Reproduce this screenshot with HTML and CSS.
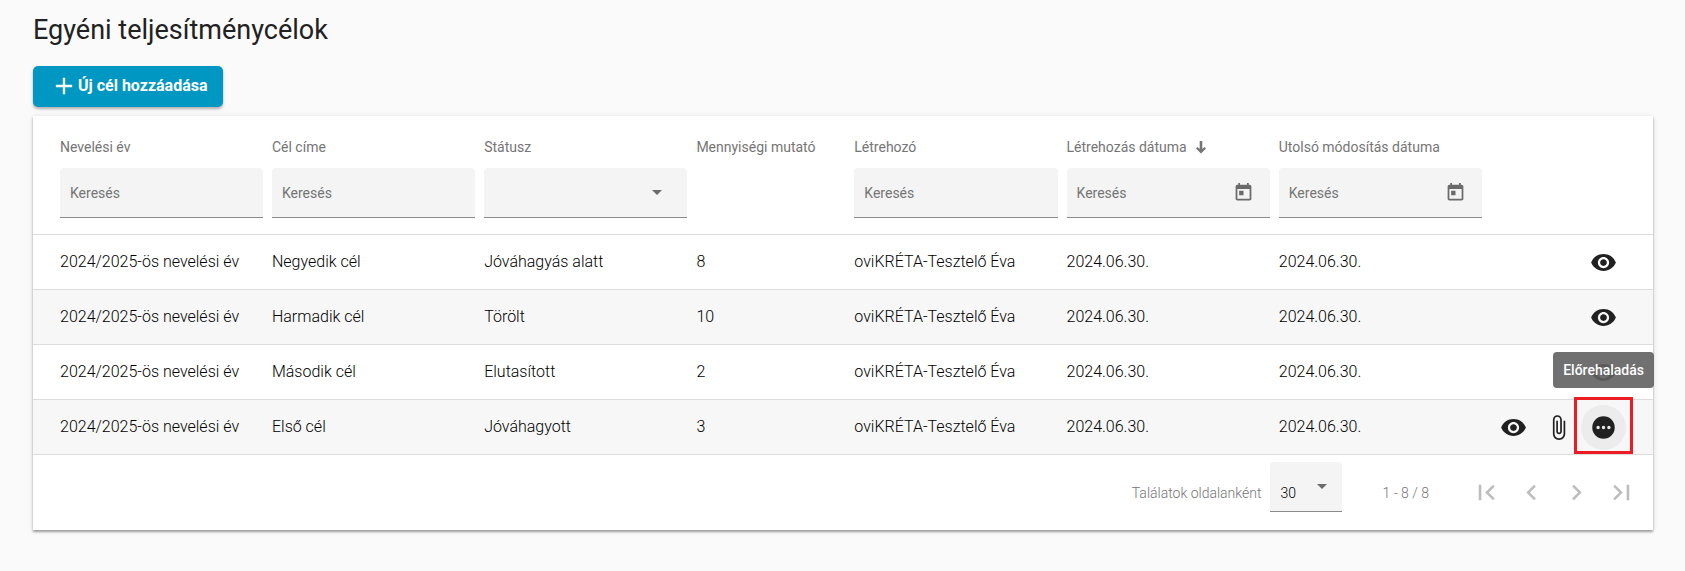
FILE: index.html
```html
<!DOCTYPE html>
<html lang="hu">
<head>
    <meta charset="UTF-8">
    <meta name="viewport" content="width=device-width, initial-scale=1.0">
    <title>Egyéni teljesítménycélok</title>
    <link rel="stylesheet" href="styles.css">
</head>
<body>
    <!-- Shared icons -->
    <svg class="icon-defs" aria-hidden="true">
        <symbol id="icon-eye" viewBox="0 0 24 24"><path d="M12 4.5C7 4.5 2.73 7.61 1 12c1.73 4.39 6 7.5 11 7.5s9.27-3.11 11-7.5c-1.73-4.39-6-7.5-11-7.5zM12 17c-2.76 0-5-2.24-5-5s2.24-5 5-5 5 2.24 5 5-2.24 5-5 5zm0-8c-1.66 0-3 1.34-3 3s1.34 3 3 3 3-1.34 3-3-1.34-3-3-3z"/></symbol>
        <symbol id="icon-clip" viewBox="0 0 24 24"><path d="M16.5 6v11.5c0 2.21-1.79 4-4 4s-4-1.79-4-4V5c0-1.38 1.12-2.5 2.5-2.5s2.5 1.12 2.5 2.5v10.5c0 .55-.45 1-1 1s-1-.45-1-1V6H10v9.5c0 1.38 1.12 2.5 2.5 2.5s2.5-1.12 2.5-2.5V5c0-2.21-1.79-4-4-4S7 2.79 7 5v12.5c0 3.04 2.46 5.5 5.5 5.5s5.5-2.46 5.5-5.5V6h-1.5z"/></symbol>
        <symbol id="icon-dots" viewBox="0 0 24 24"><path fill-rule="evenodd" d="M12 2a10 10 0 1 0 0 20 10 10 0 0 0 0-20zM7.2 10.5a1.5 1.5 0 1 1 0 3 1.5 1.5 0 0 1 0-3zm4.8 0a1.5 1.5 0 1 1 0 3 1.5 1.5 0 0 1 0-3zm4.8 0a1.5 1.5 0 1 1 0 3 1.5 1.5 0 0 1 0-3z"/></symbol>
        <symbol id="icon-calendar" viewBox="0 0 24 24"><path d="M19 3h-1V1h-2v2H8V1H6v2H5c-1.11 0-1.99.9-1.99 2L3 19c0 1.1.89 2 2 2h14c1.1 0 2-.9 2-2V5c0-1.1-.9-2-2-2zm0 16H5V8h14v11zM7 10h5v5H7z"/></symbol>
    </svg>

    <main class="page">
        <h1 class="page-title">Egyéni teljesítménycélok</h1>

        <button type="button" class="add-button">
            <svg viewBox="0 0 24 24"><path d="M19 13h-6v6h-2v-6H5v-2h6V5h2v6h6v2z"/></svg>
            Új cél hozzáadása
        </button>

        <section class="card">
            <table class="goals">
                <colgroup>
                    <col class="col-year">
                    <col class="col-text">
                    <col class="col-text">
                    <col class="col-count">
                    <col class="col-text">
                    <col class="col-text">
                    <col class="col-text">
                    <col>
                </colgroup>
                <thead>
                    <tr>
                        <th>
                            <label class="col-label" for="filter-year">Nevelési év</label>
                            <div class="field"><input type="text" id="filter-year" placeholder="Keresés"></div>
                        </th>
                        <th>
                            <label class="col-label" for="filter-title">Cél címe</label>
                            <div class="field"><input type="text" id="filter-title" placeholder="Keresés"></div>
                        </th>
                        <th>
                            <label class="col-label" for="filter-status">Státusz</label>
                            <div class="field select-field">
                                <select id="filter-status">
                                    <option></option>
                                    <option>Jóváhagyás alatt</option>
                                    <option>Törölt</option>
                                    <option>Elutasított</option>
                                    <option>Jóváhagyott</option>
                                </select>
                                <span class="caret"></span>
                            </div>
                        </th>
                        <th><span class="col-label">Mennyiségi mutató</span></th>
                        <th>
                            <label class="col-label" for="filter-creator">Létrehozó</label>
                            <div class="field"><input type="text" id="filter-creator" placeholder="Keresés"></div>
                        </th>
                        <th aria-sort="descending">
                            <label class="col-label" for="filter-created">Létrehozás dátuma
                                <svg class="sort-arrow" viewBox="0 0 12 14"><path d="M4.7 1h2.6v8l2.2-2.1 1.5 1.6L6 13.500 1 8.500l1.500-1.600L4.700 9z"/></svg>
                            </label>
                            <div class="field">
                                <input type="text" id="filter-created" placeholder="Keresés">
                                <button type="button" class="date-button" aria-label="Naptár"><svg><use href="#icon-calendar"/></svg></button>
                            </div>
                        </th>
                        <th>
                            <label class="col-label" for="filter-modified">Utolsó módosítás dátuma</label>
                            <div class="field">
                                <input type="text" id="filter-modified" placeholder="Keresés">
                                <button type="button" class="date-button" aria-label="Naptár"><svg><use href="#icon-calendar"/></svg></button>
                            </div>
                        </th>
                        <th></th>
                    </tr>
                </thead>
                <tbody>
                    <tr>
                        <td>2024/2025-ös nevelési év</td>
                        <td>Negyedik cél</td>
                        <td>Jóváhagyás alatt</td>
                        <td>8</td>
                        <td>oviKRÉTA-Tesztelő Éva</td>
                        <td>2024.06.30.</td>
                        <td>2024.06.30.</td>
                        <td>
                            <div class="actions">
                                <button type="button" class="icon-button" aria-label="Megtekintés"><svg><use href="#icon-eye"/></svg></button>
                            </div>
                        </td>
                    </tr>
                    <tr>
                        <td>2024/2025-ös nevelési év</td>
                        <td>Harmadik cél</td>
                        <td>Törölt</td>
                        <td>10</td>
                        <td>oviKRÉTA-Tesztelő Éva</td>
                        <td>2024.06.30.</td>
                        <td>2024.06.30.</td>
                        <td>
                            <div class="actions">
                                <button type="button" class="icon-button" aria-label="Megtekintés"><svg><use href="#icon-eye"/></svg></button>
                            </div>
                        </td>
                    </tr>
                    <tr>
                        <td>2024/2025-ös nevelési év</td>
                        <td>Második cél</td>
                        <td>Elutasított</td>
                        <td>2</td>
                        <td>oviKRÉTA-Tesztelő Éva</td>
                        <td>2024.06.30.</td>
                        <td>2024.06.30.</td>
                        <td>
                            <div class="actions">
                                <button type="button" class="icon-button" aria-label="Megtekintés"><svg><use href="#icon-eye"/></svg></button>
                            </div>
                        </td>
                    </tr>
                    <tr>
                        <td>2024/2025-ös nevelési év</td>
                        <td>Első cél</td>
                        <td>Jóváhagyott</td>
                        <td>3</td>
                        <td>oviKRÉTA-Tesztelő Éva</td>
                        <td>2024.06.30.</td>
                        <td>2024.06.30.</td>
                        <td>
                            <div class="actions">
                                <button type="button" class="icon-button" aria-label="Megtekintés"><svg><use href="#icon-eye"/></svg></button>
                                <button type="button" class="icon-button" aria-label="Csatolmányok"><svg><use href="#icon-clip"/></svg></button>
                                <div class="highlighted">
                                    <button type="button" class="icon-button active" aria-labelledby="progress-tip"><svg><use href="#icon-dots"/></svg></button>
                                    <span class="tooltip" role="tooltip" id="progress-tip">Előrehaladás</span>
                                </div>
                            </div>
                        </td>
                    </tr>
                </tbody>
            </table>

            <div class="paginator">
                <label for="page-size">Találatok oldalanként</label>
                <div class="field select-field page-size">
                    <select id="page-size">
                        <option>30</option>
                        <option>50</option>
                        <option>100</option>
                    </select>
                    <span class="caret"></span>
                </div>
                <span class="range">1 - 8 / 8</span>
                <nav class="pages">
                    <button type="button" aria-label="Első oldal" disabled><svg viewBox="0 0 24 24"><path d="M18.41 16.59L13.82 12l4.59-4.59L17 6l-6 6 6 6zM6 6h2v12H6z"/></svg></button>
                    <button type="button" aria-label="Előző oldal" disabled><svg viewBox="0 0 24 24"><path d="M15.41 7.41L14 6l-6 6 6 6 1.41-1.41L10.83 12z"/></svg></button>
                    <button type="button" aria-label="Következő oldal" disabled><svg viewBox="0 0 24 24"><path d="M10 6L8.59 7.41 13.17 12l-4.58 4.59L10 18l6-6z"/></svg></button>
                    <button type="button" aria-label="Utolsó oldal" disabled><svg viewBox="0 0 24 24"><path d="M5.59 7.41L10.18 12l-4.59 4.59L7 18l6-6-6-6zM16 6h2v12h-2z"/></svg></button>
                </nav>
            </div>
        </section>
    </main>
</body>
</html>
```
FILE: styles.css
```css
* {
    margin: 0;
    padding: 0;
    box-sizing: border-box;
}

body {
    background-color: #fafafa;
    color: #212121;
    font-family: Roboto, "Liberation Sans", sans-serif;
    font-size: 16px;
}

button,
input,
select {
    font: inherit;
    color: inherit;
    border: none;
    background: none;
    outline: none;
}

button {
    cursor: pointer;
}

svg {
    display: block;
    fill: currentColor;
}

.icon-defs {
    display: none;
}

.page {
    padding: 12px 32px 40px 33px;
}

.page-title {
    font-size: 27px;
    font-weight: 400;
    line-height: 36px;
    margin-bottom: 18px;
}

.add-button {
    display: flex;
    align-items: center;
    height: 41px;
    padding: 0 15px 2px 17px;
    border-radius: 5px;
    background-color: #0098c3;
    color: white;
    font-weight: 700;
    box-shadow: 0 2px 3px rgba(0, 0, 0, 0.3);
}

.add-button svg {
    width: 28px;
    height: 28px;
}

.card {
    margin-top: 9px;
    background-color: white;
    box-shadow: 0 2px 2px rgba(0, 0, 0, 0.3), 0 1px 5px rgba(0, 0, 0, 0.15);
}

/* Table */
.goals {
    width: 100%;
    table-layout: fixed;
    border-collapse: collapse;
}

.col-year {
    width: 14.75%;
}

.col-text {
    width: 13.1%;
}

.col-count {
    width: 9.75%;
}

.goals th,
.goals td {
    text-align: left;
    border-bottom: 1px solid #dcdcdc;
    white-space: nowrap;
}

.goals th {
    vertical-align: top;
    padding: 20px 9px 16px 0;
    color: #757575;
    font-size: 14px;
    font-weight: 400;
}

.goals td {
    height: 55px;
    padding-bottom: 1px;
    color: #000;
    font-weight: 300;
}

.goals th:first-child,
.goals td:first-child {
    padding-left: 27px;
}

.goals td:last-child {
    padding-right: 27px;
    padding-bottom: 0;
}

.goals tbody tr:nth-child(even) {
    background-color: #f7f7f7;
}

.col-label {
    display: flex;
    align-items: center;
    gap: 8px;
    height: 22px;
    margin-bottom: 10px;
}

.sort-arrow {
    width: 12px;
    height: 14px;
}

/* Filter fields */
.field {
    display: flex;
    align-items: center;
    height: 50px;
    background-color: #f4f4f4;
    border-bottom: 1px solid #8a8a8a;
    border-radius: 4px 4px 0 0;
}

.field input {
    flex: 1;
    min-width: 0;
    height: 100%;
    padding-left: 10px;
}

.field input::placeholder {
    color: #757575;
    opacity: 1;
}

.date-button {
    padding-right: 16px;
    color: #6b6b6b;
}

.date-button svg {
    width: 21px;
    height: 21px;
}

.select-field {
    display: grid;
}

.select-field select,
.select-field .caret {
    grid-area: 1 / 1;
}

.select-field select {
    appearance: none;
    width: 100%;
    height: 100%;
    padding-left: 10px;
}

.caret {
    justify-self: end;
    margin-right: 25px;
    border: 5px solid transparent;
    border-top-color: #6b6b6b;
    border-bottom: none;
    pointer-events: none;
}

/* Row actions */
.actions {
    display: flex;
    justify-content: flex-end;
    color: #212121;
}

.icon-button {
    display: flex;
    align-items: center;
    justify-content: center;
    width: 45px;
    height: 45px;
    border-radius: 50%;
}

.icon-button svg {
    width: 27px;
    height: 27px;
}

.icon-button.active {
    background-color: #ececec;
}

.highlighted {
    position: relative;
}

.highlighted::after {
    content: "";
    position: absolute;
    inset: -8px -7px -4px;
    border: 3px solid #ed1c24;
    pointer-events: none;
}

.tooltip {
    position: absolute;
    right: -28px;
    bottom: 62px;
    padding: 0 10px;
    border-radius: 4px;
    background-color: rgba(97, 97, 97, 0.9);
    color: white;
    font-size: 14px;
    font-weight: 500;
    line-height: 36px;
}

/* Paginator */
.paginator {
    display: flex;
    align-items: center;
    justify-content: flex-end;
    height: 75px;
    padding-right: 9px;
    color: #757575;
    font-size: 14px;
    font-weight: 300;
}

.page-size {
    width: 72px;
    margin: 0 40px 11px 9px;
    color: #000;
}

.page-size select {
    padding-top: 12px;
}

.page-size .caret {
    margin-right: 15px;
}

.pages {
    display: flex;
    margin-left: 35px;
}

.pages button {
    display: flex;
    align-items: center;
    justify-content: center;
    width: 45px;
    height: 45px;
    color: #bdbdbd;
    cursor: default;
}

.pages svg {
    width: 31px;
    height: 31px;
}
```
